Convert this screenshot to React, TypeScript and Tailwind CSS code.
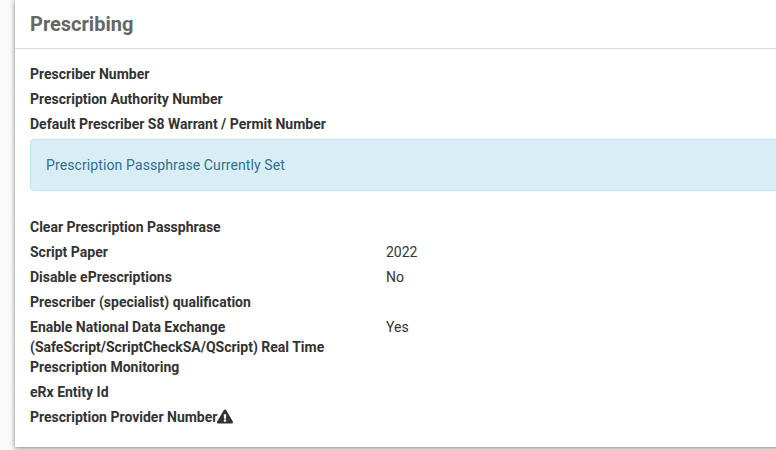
import { FC, ReactNode } from 'react';
import { FaExclamationTriangle } from 'react-icons/fa';

type Row = {
    label: ReactNode;
    value?: string;
};

const topRows: Row[] = [
    { label: 'Prescriber Number' },
    { label: 'Prescription Authority Number' },
    { label: 'Default Prescriber S8 Warrant / Permit Number' },
];

const bottomRows: Row[] = [
    { label: 'Clear Prescription Passphrase' },
    { label: 'Script Paper', value: '2022' },
    { label: 'Disable ePrescriptions', value: 'No' },
    { label: 'Prescriber (specialist) qualification' },
    { label: 'Enable National Data Exchange (SafeScript/ScriptCheckSA/QScript) Real Time Prescription Monitoring', value: 'Yes' },
    { label: 'eRx Entity Id' },
    {
        label: (
            <>
                Prescription Provider Number
                <FaExclamationTriangle className="inline-block w-4 h-[15px] align-[-2px] text-[#333333]" />
            </>
        ),
    },
];

const DetailRow: FC<{ row: Row }> = ({ row }) => (
    <div className="flex">
        <div className="w-[356px] pr-4 font-bold">{row.label}</div>
        <div>{row.value}</div>
    </div>
);

const App: FC = () => {
    return (
        <main className="w-[776px] h-[450px] overflow-hidden bg-[#fafafa] font-['Roboto',sans-serif] text-sm leading-5 text-[#333333]">
            <div className="ml-[15px] w-[800px] h-[447px] bg-white shadow-[0_1px_5px_rgba(0,0,0,0.5)]">
                <div className="h-[49px] border-b border-[#dddddd] px-[15px] flex items-center">
                    <h1 className="text-xl font-bold text-[#666666]">Prescribing</h1>
                </div>
                <div className="px-[15px] pt-[15px]">
                    <div className="flex flex-col gap-[5px]">
                        {topRows.map((row, i) => <DetailRow key={i} row={row} />)}
                    </div>
                    <div className="mt-[5px] mb-[26px] h-[52px] flex items-center px-[15px] rounded border border-[#bce8f1] bg-[#d9edf7] text-[#31708f] tracking-[0.11px]">
                        Prescription Passphrase Currently Set
                    </div>
                    <div className="flex flex-col gap-[5px]">
                        {bottomRows.map((row, i) => <DetailRow key={i} row={row} />)}
                    </div>
                </div>
            </div>
        </main>
    );
};

export default App;
